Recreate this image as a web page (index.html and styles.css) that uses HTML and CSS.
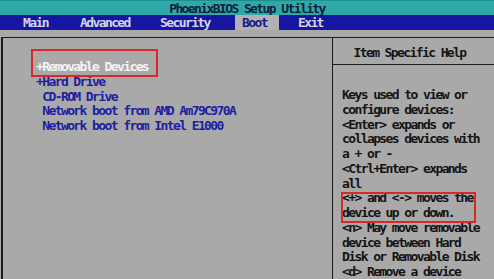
FILE: index.html
```html
<!DOCTYPE html>
<html lang="en">
<head>
  <meta charset="UTF-8">
  <title>PhoenixBIOS Setup Utility</title>
  <link rel="stylesheet" href="styles.css">
</head>

<body>
<!-- タイトルとメニュー -->
<div class="title-bar">PhoenixBIOS Setup Utility</div>
<div class="menu-bar">
  <span class="menu-item main">Main</span>
  <span class="menu-item advanced">Advanced</span>
  <span class="menu-item security">Security</span>
  <span class="menu-item active">Boot</span>
  <span class="menu-item exit">Exit</span>
</div>

<!-- 起動順の画面 -->
<div class="screen">
  <!-- 左側：起動デバイス一覧 -->
  <div class="boot-list">
    <div class="boot-item selected">+Removable Devices</div>
    <div class="boot-item">+Hard Drive</div>
    <div class="boot-item"> CD-ROM Drive</div>
    <div class="boot-item"> Network boot from AMD Am79C970A</div>
    <div class="boot-item"> Network boot from Intel E1000</div>
    <div class="mark mark-left"></div>
  </div>

  <!-- 右側：ヘルプ -->
  <div class="help">
    <div class="help-title">Item Specific Help</div>
    <div class="help-text">
      <div>Keys used to view or</div>
      <div>configure devices:</div>
      <div>&lt;Enter&gt; expands or</div>
      <div>collapses devices with</div>
      <div>a + or -</div>
      <div>&lt;Ctrl+Enter&gt; expands</div>
      <div>all</div>
      <div>&lt;+&gt; and &lt;-&gt; moves the</div>
      <div>device up or down.</div>
      <div>&lt;n&gt; May move removable</div>
      <div>device between Hard</div>
      <div>Disk or Removable Disk</div>
      <div>&lt;d&gt; Remove a device</div>
    </div>
    <div class="mark mark-right"></div>
  </div>
</div>
</body>
</html>
```

FILE: styles.css
```css
body {
  margin: 0;
  height: 279px;
  overflow: hidden;
  background-color: #a9a9a9;
  font-family: "DejaVu Sans Mono", "Liberation Mono", monospace;
  font-size: 13px;
  font-weight: bold;
  letter-spacing: -1.6px;
}

/* タイトル */
.title-bar {
  height: 15px;
  line-height: 16px;
  text-align: center;
  background-color: #2ca9a8;
  border-top: 1px solid #1f8f8e;
  box-sizing: border-box;
  color: #10203a;
}

/* メニュー */
.menu-bar {
  display: flex;
  height: 15px;
  line-height: 15px;
  padding-left: 23px;
  background-color: #1616a2;
  color: #d4d4e6;
}

.main { width: 57px; }
.advanced { width: 80px; }
.security { width: 75px; }

.active {
  padding: 0 12px 0 7px;
  background-color: #b2b2b2;
  color: #1a1a88;
}

.exit { margin-left: 19px; }

/* 画面の枠 */
.screen {
  display: grid;
  grid-template-columns: 330px 1fr;
  height: 242px;
  margin: 7px 0 0 1px;
  border-top: 1px solid #1c1c1c;
  border-left: 2px solid #1c1c1c;
}

.boot-list {
  position: relative;
  padding: 22px 0 0 33px;
  border-right: 1px solid #1c1c1c;
  line-height: 14.75px;
  color: #1e1e9e;
}

.boot-item { white-space: pre; }

.selected { color: #f4f4f4; }

.help { position: relative; }

.help-title {
  height: 27px;
  padding: 3px 8px 0 0;
  box-sizing: border-box;
  line-height: 24px;
  text-align: center;
  border-bottom: 1px solid #1c1c1c;
  color: #141414;
}

.help-text {
  padding: 23px 0 0 9px;
  line-height: 14.75px;
  color: #141414;
}

.help-text div { white-space: pre; }

/* 赤い囲み */
.mark {
  position: absolute;
  box-sizing: border-box;
  border: 2px solid #d8282c;
}

.mark-left {
  left: 28px;
  top: 11px;
  width: 127px;
  height: 28px;
}

.mark-right {
  left: 8px;
  top: 154px;
  width: 135px;
  height: 31px;
}
```
